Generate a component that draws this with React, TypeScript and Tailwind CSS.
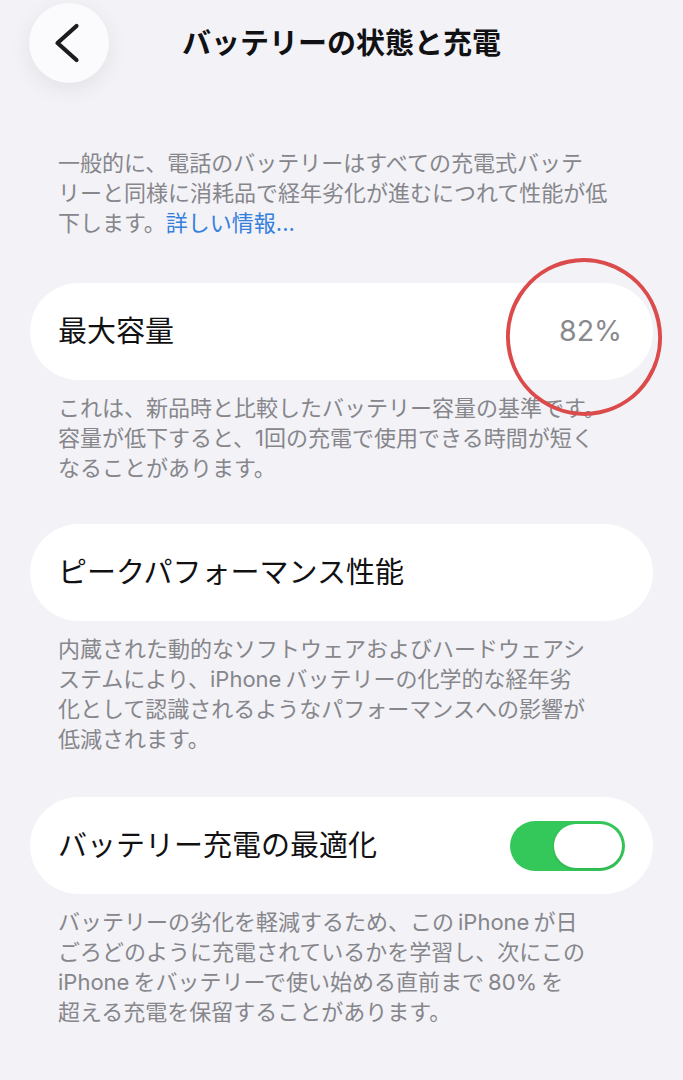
import React, { useState } from 'react';

const JP_FONT = "font-['Inter','Noto_Sans_CJK_JP',sans-serif]";

interface SettingRowProps {
  label: string;
  children?: React.ReactNode;
  className?: string;
}

const SettingRow = ({ label, children, className = '' }: SettingRowProps): JSX.Element => (
  <div className={`relative mx-[30px] flex h-[97px] items-center justify-between rounded-full bg-white pl-[28px] pr-[28px] ${className}`}>
    <span className="text-[29px] leading-none text-[#111113]">{label}</span>
    {children}
  </div>
);

const Caption = ({ lines, children }: { lines: string[]; children?: React.ReactNode }): JSX.Element => (
  <p className="mt-[13px] px-[58px] text-[22px] leading-[30px] text-[#86868b]">
    {lines.map((line, i) => (
      <React.Fragment key={i}>
        {line}
        {i < lines.length - 1 && <br />}
      </React.Fragment>
    ))}
    {children}
  </p>
);

const Toggle = ({ on, onChange }: { on: boolean; onChange: (v: boolean) => void }): JSX.Element => (
  <button
    onClick={() => onChange(!on)}
    className={`flex h-[50px] w-[115px] items-center rounded-full p-[3px] transition-colors duration-200 ${
      on ? 'justify-end bg-[#34c759]' : 'justify-start bg-[#e3e3e8]'
    }`}
  >
    <span className="h-[44px] w-[68px] rounded-full bg-white shadow-[0_1px_3px_rgba(0,0,0,0.12)]" />
  </button>
);

const App = (): JSX.Element => {
  const [optimized, setOptimized] = useState(true);

  return (
    <div className={`min-h-screen bg-[#f2f2f7] pb-10 ${JP_FONT}`}>
      {/* Navigation bar */}
      <header className="grid grid-cols-[80px_1fr_80px] items-center px-[29px] pt-[3px]">
        <button className="flex h-[80px] w-[80px] items-center justify-center rounded-full bg-[#fbfbfd] shadow-[0_6px_22px_rgba(0,0,0,0.07)]">
          <svg width="80" height="80" viewBox="0 0 80 80" fill="none">
            <path d="M47.5 23 L28.5 40 L47.5 57" stroke="#1c1c1e" strokeWidth="4.2" strokeLinecap="round" strokeLinejoin="round" />
          </svg>
        </button>
        <h1 className="text-center text-[29px] font-bold leading-none text-[#111113]">バッテリーの状態と充電</h1>
        <div />
      </header>

      <p className="mt-[65px] px-[58px] text-[22px] leading-[30px] text-[#86868b]">
        一般的に、電話のバッテリーはすべての充電式バッテ
        <br />
        リーと同様に消耗品で経年劣化が進むにつれて性能が低
        <br />
        下します。<span className="text-[#3480dc]">詳しい情報...</span>
      </p>

      {/* Maximum capacity */}
      <SettingRow label="最大容量" className="mt-[45px]">
        <span className="pr-[3px] text-[28.5px] leading-none text-[#8a8a8e]">82%</span>
        <svg className="pointer-events-none absolute left-[474px] top-[-26px]" width="160" height="160" viewBox="0 0 160 160" fill="none">
          <ellipse cx="80" cy="80" rx="76" ry="77" transform="rotate(-12 80 80)" stroke="#dc4b4b" strokeWidth="4" />
        </svg>
      </SettingRow>
      <Caption
        lines={[
          'これは、新品時と比較したバッテリー容量の基準です。',
          '容量が低下すると、1回の充電で使用できる時間が短く',
          'なることがあります。',
        ]}
      />

      {/* Peak performance */}
      <SettingRow label="ピークパフォーマンス性能" className="mt-[41px]" />
      <Caption
        lines={[
          '内蔵された動的なソフトウェアおよびハードウェアシ',
          'ステムにより、iPhone\u2009バッテリーの化学的な経年劣',
          '化として認識されるようなパフォーマンスへの影響が',
          '低減されます。',
        ]}
      />

      {/* Optimized charging */}
      <SettingRow label="バッテリー充電の最適化" className="mt-[43px]">
        <Toggle on={optimized} onChange={setOptimized} />
      </SettingRow>
      <Caption
        lines={[
          'バッテリーの劣化を軽減するため、この\u2009iPhone\u2009が日',
          'ごろどのように充電されているかを学習し、次にこの',
          'iPhone\u2009をバッテリーで使い始める直前まで\u200980%\u2009を',
          '超える充電を保留することがあります。',
        ]}
      />
    </div>
  );
};

export default App;
